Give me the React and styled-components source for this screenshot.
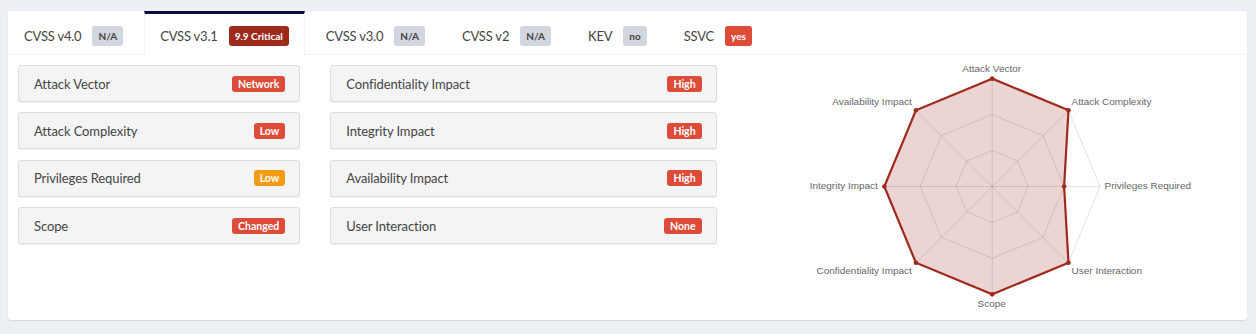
import React from "react";
import styled, { createGlobalStyle } from "styled-components";

const Global = createGlobalStyle`
  html, body { margin: 0; padding: 0; background: #ecf0f5; }
  body { font-family: Lato, "Liberation Sans", sans-serif; color: #444; }
  * { box-sizing: border-box; }
`;

const Page = styled.div`
  padding: 11px 9px 14px 8px;
`;

const Card = styled.div`
  background: #fff;
  border-radius: 3px;
  box-shadow: 0 1px 1px rgba(0, 0, 0, 0.1);
`;

const TabBar = styled.div`
  display: flex;
  border-bottom: 1px solid #f4f4f4;
`;

const Tab = styled.div`
  display: flex;
  align-items: center;
  gap: 11px;
  height: ${(p) => (p.$active ? "44px" : "43px")};
  margin-bottom: ${(p) => (p.$active ? "-1px" : "0")};
  margin-right: 5px;
  padding: ${(p) => (p.$active ? "4px 15px 1px" : "4px 15px 0")};
  border-top: 3px solid ${(p) => (p.$active ? "#0b0b33" : "transparent")};
  border-left: 1px solid ${(p) => (p.$active ? "#f4f4f4" : "transparent")};
  border-right: 1px solid ${(p) => (p.$active ? "#f4f4f4" : "transparent")};
  background: #fff;
  font-size: 13px;
  letter-spacing: -0.2px;
  color: #444;
`;

const TabBadge = styled.span`
  display: inline-flex;
  align-items: center;
  height: 20px;
  padding: 0 6px;
  border-radius: 3px;
  font-size: 10px;
  font-weight: 700;
  letter-spacing: 0;
  background: ${(p) => p.$bg};
  color: ${(p) => p.$fg || "#fff"};
`;

const Body = styled.div`
  padding: 6px 10px 10px;
`;

const Grid = styled.div`
  display: flex;
  margin: 0 -15px;
`;

const Col = styled.div`
  flex: 0 0 ${(p) => p.$w};
  max-width: ${(p) => p.$w};
  padding: ${(p) => (p.$chart ? "0 15px" : "4px 15px 0")};
  display: flex;
  flex-direction: column;
  gap: 10.4px;
`;

const MetricRow = styled.div`
  display: flex;
  align-items: center;
  justify-content: space-between;
  height: 37px;
  padding: 0 14px 0 15px;
  background: #f4f4f4;
  border: 1px solid #ddd;
  border-radius: 3px;
  box-shadow: 0 1px 1px rgba(0, 0, 0, 0.06);
  font-size: 13px;
  letter-spacing: -0.1px;
  color: #444;
`;

const RowBadge = styled.span`
  display: inline-flex;
  align-items: center;
  height: 16px;
  padding: 0 6px;
  border-radius: 3px;
  font-size: 10.5px;
  font-weight: 700;
  letter-spacing: 0;
  color: #fff;
  background: ${(p) => p.$bg};
`;

const ChartSvg = styled.svg`
  display: block;
  width: 100%;
  height: 249px;
  font-family: "Liberation Sans", Arial, sans-serif;
`;

const RED = "#dd4b39";
const ORANGE = "#f39c12";
const GRAY = "#d2d6de";
const DARK = "#9e2a1e";

const tabs = [
  { name: "CVSS v4.0", badge: "N/A", bg: GRAY, fg: "#444" },
  { name: "CVSS v3.1", badge: "9.9 Critical", bg: DARK, active: true },
  { name: "CVSS v3.0", badge: "N/A", bg: GRAY, fg: "#444" },
  { name: "CVSS v2", badge: "N/A", bg: GRAY, fg: "#444" },
  { name: "KEV", badge: "no", bg: GRAY, fg: "#444" },
  { name: "SSVC", badge: "yes", bg: RED },
];

const left = [
  ["Attack Vector", "Network", RED],
  ["Attack Complexity", "Low", RED],
  ["Privileges Required", "Low", ORANGE],
  ["Scope", "Changed", RED],
];
const mid = [
  ["Confidentiality Impact", "High", RED],
  ["Integrity Impact", "High", RED],
  ["Availability Impact", "High", RED],
  ["User Interaction", "None", RED],
];

const axes = [
  { label: "Attack Vector", v: 1, x: 245, y: 7, a: "middle" },
  { label: "Attack Complexity", v: 1, x: 325, y: 39.5, a: "start" },
  { label: "Privileges Required", v: 2 / 3, x: 358, y: 124.5, a: "start" },
  { label: "User Interaction", v: 1, x: 325, y: 209.5, a: "start" },
  { label: "Scope", v: 1, x: 245, y: 242, a: "middle" },
  { label: "Confidentiality Impact", v: 1, x: 165, y: 209.5, a: "end" },
  { label: "Integrity Impact", v: 1, x: 131, y: 124.5, a: "end" },
  { label: "Availability Impact", v: 1, x: 165, y: 39.5, a: "end" },
];

const CX = 245.5;
const CY = 121.5;
const R = 108;
const pt = (i, r) => {
  const t = (i * Math.PI) / 4;
  return [CX + r * Math.sin(t), CY - r * Math.cos(t)];
};
const poly = (r) => axes.map((_, i) => pt(i, r).join(",")).join(" ");

function Radar() {
  const data = axes.map((a, i) => pt(i, R * a.v));
  return (
    <ChartSvg viewBox="0 -4 491 249">
      {[1 / 3, 2 / 3, 1].map((f) => (
        <polygon key={f} points={poly(R * f)} fill="none" stroke="rgba(0,0,0,0.12)" strokeWidth="1" />
      ))}
      {axes.map((_, i) => {
        const [x, y] = pt(i, R);
        return <line key={i} x1={CX} y1={CY} x2={x} y2={y} stroke="rgba(0,0,0,0.12)" strokeWidth="1" />;
      })}
      <polygon
        points={data.map((p) => p.join(",")).join(" ")}
        fill="rgba(158,42,30,0.2)"
        stroke={DARK}
        strokeWidth="2.2"
        strokeLinejoin="miter"
      />
      {data.map(([x, y], i) => (
        <circle key={i} cx={x} cy={y} r="2.3" fill={DARK} />
      ))}
      {axes.map((a) => (
        <text key={a.label} x={a.x} y={a.y} textAnchor={a.a} fontSize="10" fill="#666">
          {a.label}
        </text>
      ))}
    </ChartSvg>
  );
}

export default function App() {
  return (
    <>
      <Global />
      <Page>
        <Card>
          <TabBar>
            {tabs.map((t) => (
              <Tab key={t.name} $active={t.active}>
                <span>{t.name}</span>
                <TabBadge $bg={t.bg} $fg={t.fg}>{t.badge}</TabBadge>
              </Tab>
            ))}
          </TabBar>
          <Body>
            <Grid>
              <Col $w="25%">
                {left.map(([l, b, c]) => (
                  <MetricRow key={l}>
                    <span>{l}</span>
                    <RowBadge $bg={c}>{b}</RowBadge>
                  </MetricRow>
                ))}
              </Col>
              <Col $w="33.3333%">
                {mid.map(([l, b, c]) => (
                  <MetricRow key={l}>
                    <span>{l}</span>
                    <RowBadge $bg={c}>{b}</RowBadge>
                  </MetricRow>
                ))}
              </Col>
              <Col $w="41.6667%" $chart>
                <Radar />
              </Col>
            </Grid>
          </Body>
        </Card>
      </Page>
    </>
  );
}
